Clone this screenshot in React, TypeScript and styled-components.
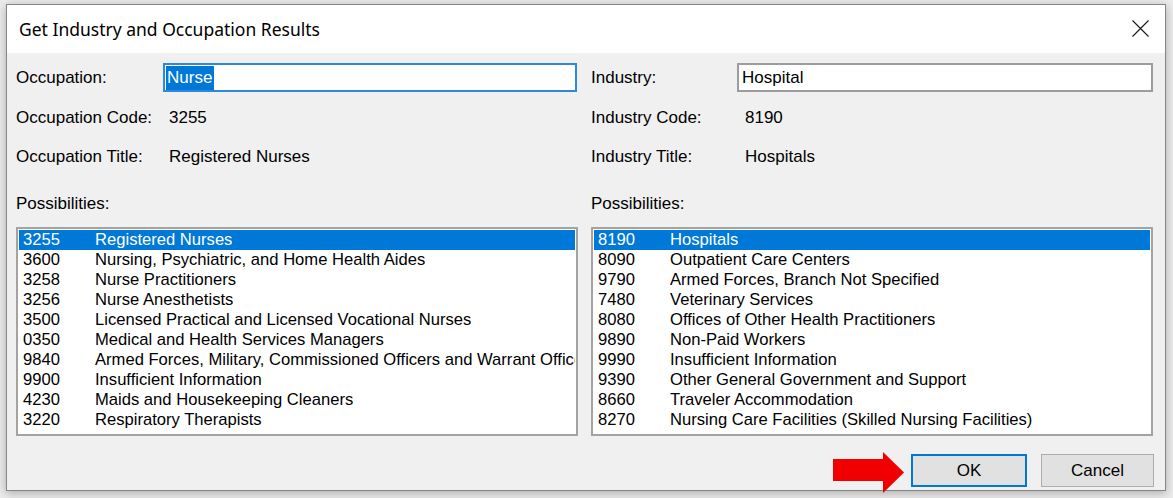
import React, { FC } from 'react';
import styled, { createGlobalStyle } from 'styled-components';

const GlobalStyle = createGlobalStyle`
  html, body {
    margin: 0;
    padding: 0;
    background: #ebebeb;
  }
  body {
    font-family: "Liberation Sans", Arial, sans-serif;
    color: #000;
  }
`;

const Page = styled.div`
  width: 1173px;
  height: 498px;
  padding: 4px 0 0 6px;
  box-sizing: border-box;
  overflow: hidden;
`;

const Window = styled.div`
  width: 1160px;
  height: 487px;
  box-sizing: border-box;
  border: 1px solid #858585;
  box-shadow: 0 2px 9px rgba(0, 0, 0, 0.28);
  display: flex;
  flex-direction: column;
  background: #f0f0f0;
`;

const TitleBar = styled.div`
  height: 48px;
  flex-shrink: 0;
  background: #fff;
  display: flex;
  align-items: center;
  justify-content: space-between;
  padding: 0 16px 0 12px;
  font-family: "Noto Sans", "Open Sans", sans-serif;
  font-size: 17.5px;
  color: #000;
`;

const CloseButton = styled.div`
  width: 18px;
  height: 18px;
  display: flex;
  align-items: center;
  justify-content: center;
  margin-top: -2px;
`;

const Body = styled.div`
  flex: 1;
  padding: 10px 11px 0 9px;
  display: flex;
  flex-direction: column;
`;

const Columns = styled.div`
  display: grid;
  grid-template-columns: 562px 562px;
  column-gap: 13px;
`;

const Panel = styled.div`
  display: flex;
  flex-direction: column;
`;

interface RowProps {
  h: number;
  mt?: number;
}

const FieldRow = styled.div<RowProps>`
  display: flex;
  align-items: center;
  height: ${ p => p.h }px;
  margin-top: ${ p => p.mt || 0 }px;
  font-size: 17px;
  white-space: nowrap;
`;

const Label = styled.div<{ w: number }>`
  width: ${ p => p.w }px;
  flex-shrink: 0;
`;

const TextBox = styled.div<{ focused?: boolean }>`
  flex: 1;
  height: 29px;
  box-sizing: border-box;
  background: #fff;
  border: 2px solid ${ p => p.focused ? '#2f88dc' : '#9c9c9c' };
  display: flex;
  align-items: center;
  padding-left: 1px;
  font-size: 17px;
  margin-right: ${ p => p.focused ? 1 : 0 }px;
`;

const Selected = styled.span`
  background: #0078d7;
  color: #fff;
  padding: 2px 2px 2px 1px;
`;

const ListBox = styled.div`
  margin-top: 13px;
  height: 209px;
  box-sizing: border-box;
  border: 2px solid #a3a3a3;
  background: #fff;
  padding: 1px;
  overflow: hidden;
`;

const ListRow = styled.div<{ selected?: boolean }>`
  display: flex;
  align-items: center;
  height: 20px;
  font-size: 16.6px;
  white-space: nowrap;
  background: ${ p => p.selected ? '#0078d7' : 'transparent' };
  color: ${ p => p.selected ? '#fff' : '#000' };
`;

const Code = styled.span`
  width: 76px;
  padding-left: 4px;
  box-sizing: border-box;
  flex-shrink: 0;
`;

const Desc = styled.span`
  overflow: hidden;
`;

const ButtonRow = styled.div`
  display: flex;
  justify-content: flex-end;
  align-items: center;
  margin-top: 11px;
`;

const Arrow = styled.svg`
  margin-right: 6px;
  margin-top: 5px;
`;

const DialogButton = styled.button<{ w: number; primary?: boolean }>`
  width: ${ p => p.w }px;
  height: 33px;
  box-sizing: border-box;
  background: #e1e1e1;
  border: ${ p => p.primary ? '2px solid #0078d7' : '1px solid #adadad' };
  font-family: "Liberation Sans", Arial, sans-serif;
  font-size: 17px;
  color: #000;
  padding: 0;
  margin-left: ${ p => p.primary ? 0 : 14 }px;
`;

const occupations = [
  ['3255', 'Registered Nurses'],
  ['3600', 'Nursing, Psychiatric, and Home Health Aides'],
  ['3258', 'Nurse Practitioners'],
  ['3256', 'Nurse Anesthetists'],
  ['3500', 'Licensed Practical and Licensed Vocational Nurses'],
  ['0350', 'Medical and Health Services Managers'],
  ['9840', 'Armed Forces, Military, Commissioned Officers and Warrant Officers'],
  ['9900', 'Insufficient Information'],
  ['4230', 'Maids and Housekeeping Cleaners'],
  ['3220', 'Respiratory Therapists'],
];

const industries = [
  ['8190', 'Hospitals'],
  ['8090', 'Outpatient Care Centers'],
  ['9790', 'Armed Forces, Branch Not Specified'],
  ['7480', 'Veterinary Services'],
  ['8080', 'Offices of Other Health Practitioners'],
  ['9890', 'Non-Paid Workers'],
  ['9990', 'Insufficient Information'],
  ['9390', 'Other General Government and Support'],
  ['8660', 'Traveler Accommodation'],
  ['8270', 'Nursing Care Facilities (Skilled Nursing Facilities)'],
];

interface SideProps {
  name: string;
  value: string;
  code: string;
  title: string;
  labelW: number;
  infoW: number;
  focused?: boolean;
  items: string[][];
}

const Side: FC<SideProps> = ({ name, value, code, title, labelW, infoW, focused, items }) => (
  <Panel>
    <FieldRow h={ 29 }>
      <Label w={ labelW }>{ name }:</Label>
      <TextBox focused={ focused }>
        { focused ? <Selected>{ value }</Selected> : <span style={ { paddingLeft: 2 } }>{ value }</span> }
      </TextBox>
    </FieldRow>
    <FieldRow h={ 20 } mt={ 16 }>
      <Label w={ infoW }>{ name } Code:</Label>
      <span>{ code }</span>
    </FieldRow>
    <FieldRow h={ 20 } mt={ 19 }>
      <Label w={ infoW }>{ name } Title:</Label>
      <span>{ title }</span>
    </FieldRow>
    <FieldRow h={ 20 } mt={ 27 }>
      <Label w={ infoW }>Possibilities:</Label>
    </FieldRow>
    <ListBox>
      { items.map(([c, d], i) => (
        <ListRow key={ c } selected={ i === 0 }>
          <Code>{ c }</Code>
          <Desc>{ d }</Desc>
        </ListRow>
      )) }
    </ListBox>
  </Panel>
);

const App: FC = () => (
  <Page>
    <GlobalStyle />
    <Window>
      <TitleBar>
        <span>Get Industry and Occupation Results</span>
        <CloseButton>
          <svg width="17" height="17" viewBox="0 0 17 17">
            <path d="M0.5 0.5 L16.5 16.5 M16.5 0.5 L0.5 16.5" stroke="#1a1a1a" strokeWidth="1.1" fill="none" />
          </svg>
        </CloseButton>
      </TitleBar>
      <Body>
        <Columns>
          <Side
            name="Occupation"
            value="Nurse"
            code="3255"
            title="Registered Nurses"
            labelW={ 147 }
            infoW={ 153 }
            focused
            items={ occupations }
          />
          <Side
            name="Industry"
            value="Hospital"
            code="8190"
            title="Hospitals"
            labelW={ 146 }
            infoW={ 154 }
            items={ industries }
          />
        </Columns>
        <ButtonRow>
          <Arrow width="72" height="42" viewBox="0 0 72 42">
            <polygon points="0,7 50,7 50,0 71,20.5 50,41 50,29 0,29" fill="#f00000" />
          </Arrow>
          <DialogButton w={ 116 } primary>OK</DialogButton>
          <DialogButton w={ 113 }>Cancel</DialogButton>
        </ButtonRow>
      </Body>
    </Window>
  </Page>
);

export default App;
